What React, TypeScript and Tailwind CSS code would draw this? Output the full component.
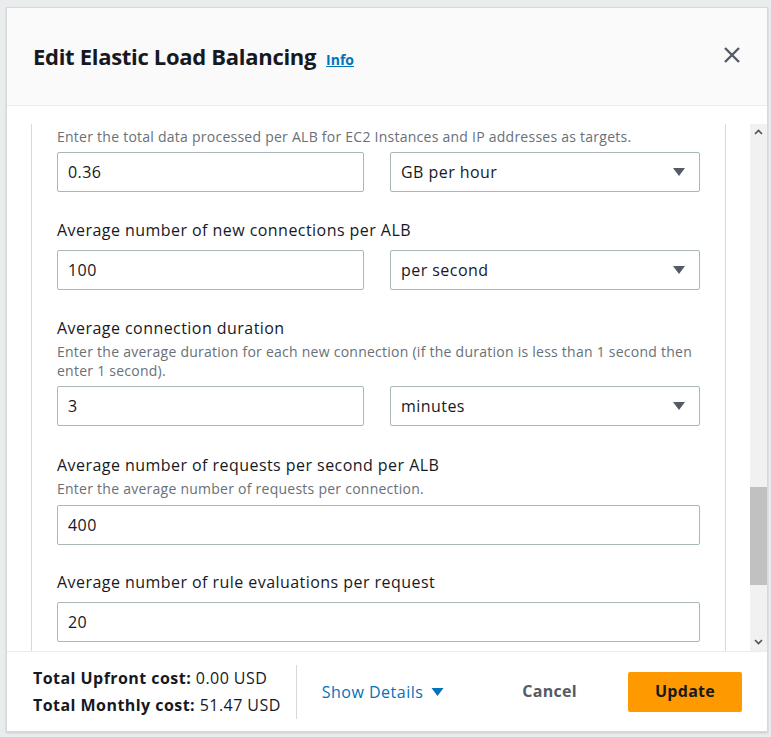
const FONT = "font-['Open_Sans',sans-serif]";

function TextInput({ value }: { value: string }) {
  return (
    <div className="flex h-[40px] flex-1 items-center rounded-[2px] border border-[#aab7b8] bg-white px-[10px] text-[16px] tracking-[0.45px] text-[#16191f]">
      {value}
    </div>
  );
}

function SelectBox({ value }: { value: string }) {
  return (
    <div className="flex h-[40px] flex-1 items-center justify-between rounded-[2px] border border-[#aab7b8] bg-white pl-[10px] pr-[13px] text-[16px] tracking-[0.45px] text-[#16191f]">
      <span>{value}</span>
      <svg width="14" height="10" viewBox="0 0 14 10">
        <path d="M1 1 L13 1 L7 9 Z" fill="#545b64" />
      </svg>
    </div>
  );
}

function Label({ children }: { children: string }) {
  return <p className="text-[16px] leading-[22px] tracking-[0.45px] text-[#16191f]">{children}</p>;
}

function Desc({ children }: { children: string }) {
  return <p className="mt-[3px] text-[14px] leading-[19px] tracking-[0.25px] text-[#687078]">{children}</p>;
}

export default function App() {
  return (
    <div className={`h-[737px] w-[771px] overflow-hidden bg-[#eaeded] pl-[6px] pt-[7px] ${FONT}`}>
      <div className="flex h-[725px] w-[762px] flex-col border border-[#d5dbdb] bg-white shadow-[0_1px_2px_rgba(0,0,0,0.15)]">
        <header className="flex h-[98px] shrink-0 items-center justify-between border-b border-[#eaeded] bg-[#fafafa] pl-[26px] pr-[26px]">
          <div className="flex items-baseline gap-[10px]">
            <h2 className="text-[22px] font-bold tracking-[-0.3px] text-[#16191f]">Edit Elastic Load Balancing</h2>
            <a className="text-[14px] font-bold text-[#0073bb] underline">Info</a>
          </div>
          <svg width="18" height="18" viewBox="0 0 18 18" className="mb-[4px]">
            <path d="M2 2 L16 16 M16 2 L2 16" stroke="#545b64" strokeWidth="2.4" />
          </svg>
        </header>

        <div className="flex min-h-0 flex-1 pl-[24px] pt-[18px]">
          <div className="flex-1 overflow-hidden border-x border-[#d5dbdb] px-[25px] pt-[3px]">
            <p className="text-[14px] leading-[20px] tracking-[0.25px] text-[#687078]">
              Enter the total data processed per ALB for EC2 Instances and IP addresses as targets.
            </p>
            <div className="mt-[5px] flex gap-[26px]">
              <TextInput value="0.36" />
              <SelectBox value="GB per hour" />
            </div>

            <div className="mt-[27px]">
              <Label>Average number of new connections per ALB</Label>
              <div className="mt-[9px] flex gap-[26px]">
                <TextInput value="100" />
                <SelectBox value="per second" />
              </div>
            </div>

            <div className="mt-[27px]">
              <Label>Average connection duration</Label>
              <Desc>
                Enter the average duration for each new connection (if the duration is less than 1 second then enter 1 second).
              </Desc>
              <div className="mt-[6px] flex gap-[26px]">
                <TextInput value="3" />
                <SelectBox value="minutes" />
              </div>
            </div>

            <div className="mt-[28px]">
              <Label>Average number of requests per second per ALB</Label>
              <Desc>Enter the average number of requests per connection.</Desc>
              <div className="mt-[7px] flex">
                <TextInput value="400" />
              </div>
            </div>

            <div className="mt-[26px]">
              <Label>Average number of rule evaluations per request</Label>
              <div className="mt-[9px] flex">
                <TextInput value="20" />
              </div>
            </div>
          </div>

          <div className="ml-[24px] flex w-[17px] flex-col items-center bg-[#f1f1f1]">
            <svg width="9" height="6" viewBox="0 0 9 6" className="mt-[5px]">
              <path d="M1 5 L4.5 1.5 L8 5" stroke="#505050" strokeWidth="1.6" fill="none" />
            </svg>
            <div className="mt-[352px] h-[98px] w-full bg-[#c1c1c1]" />
            <div className="flex-1" />
            <svg width="9" height="6" viewBox="0 0 9 6" className="mb-[6px]">
              <path d="M1 1 L4.5 4.5 L8 1" stroke="#505050" strokeWidth="1.6" fill="none" />
            </svg>
          </div>
        </div>

        <footer className="flex h-[80px] shrink-0 items-center border-t border-[#eaeded] pl-[26px] pr-[25px]">
          <div className="text-[16px] leading-[27px] tracking-[0.45px] text-[#16191f]">
            <p>
              <span className="font-bold">Total Upfront cost:</span> 0.00 USD
            </p>
            <p>
              <span className="font-bold">Total Monthly cost:</span> 51.47 USD
            </p>
          </div>
          <div className="ml-[15px] h-[54px] w-px bg-[#d5dbdb]" />
          <button className="ml-[25px] flex items-center gap-[8px] text-[16px] tracking-[0.5px] text-[#0073bb]">
            Show Details
            <svg width="13" height="10" viewBox="0 0 13 10">
              <path d="M0.5 1 L12.5 1 L6.5 9 Z" fill="#0073bb" />
            </svg>
          </button>
          <div className="flex-1" />
          <button className="mb-[2px] mr-[51px] text-[16px] font-bold tracking-[0.3px] text-[#545b64]">Cancel</button>
          <button className="h-[40px] w-[114px] rounded-[2px] bg-[#ff9900] pb-[2px] text-[16px] font-bold tracking-[0.3px] text-[#16191f]">
            Update
          </button>
        </footer>
      </div>
    </div>
  );
}
